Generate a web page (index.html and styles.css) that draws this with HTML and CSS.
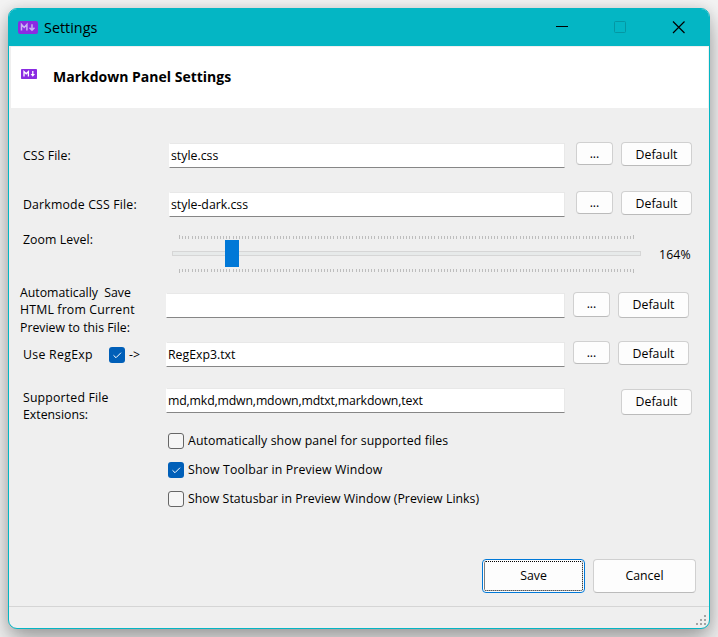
FILE: index.html
```html
<!DOCTYPE html>
<html lang="en">
<head>
<meta charset="utf-8">
<title>Settings</title>
<link rel="stylesheet" href="styles.css">
</head>
<body>
<div class="window">
  <div class="titlebar">
    <svg class="logo-large" width="20" height="13" viewBox="0 0 20 13"><rect width="20" height="13" rx="2.2" fill="#8a2be2"/><path d="M3.500 9.500v-6l2.700 3 2.700-3v6M14 3.200v5.600M11.500 6.800l2.500 2.400 2.500-2.400" fill="none" stroke="#c7b5f3" stroke-width="1.500"/></svg>
    <span class="title">Settings</span>
    <svg class="controls" width="132" height="14" viewBox="0 0 132 14"><path d="M1 6.500h12" stroke="#000"/><rect x="59.500" y="1.500" width="11" height="11" rx="1" fill="none" stroke="#0597a3"/><path d="M118 1.500l11.500 11.500M129.500 1.500L118 13" stroke="#000" stroke-width="1.200"/></svg>
  </div>
  <div class="header">
    <svg class="logo-small" width="16" height="10" viewBox="0 0 16 10"><rect width="16" height="10" rx=".7" fill="#8a2be2"/><path d="M3 7.500v-5l2.200 2.300 2.200-2.300v5M11.800 2v4" fill="none" stroke="#fff" stroke-width="1.300"/><path d="M9.600 5h4.400l-2.200 2.700z" fill="#fff"/></svg>
    <h1>Markdown Panel Settings</h1>
  </div>
  <div class="content">
    <div class="row">
      <label class="css-label">CSS File:</label>
      <div class="field">style.css</div>
      <button class="browse">...</button><button class="default">Default</button>
    </div>
    <div class="row">
      <label class="dark-label">Darkmode CSS File:</label>
      <div class="field">style-dark.css</div>
      <button class="browse">...</button><button class="default">Default</button>
    </div>
    <div class="row slider-row">
      <label class="zoom-label">Zoom Level:</label>
      <div class="slider"><div class="ticks"></div><div class="track"><div class="thumb"></div></div><div class="ticks bottom"></div></div>
      <span class="percent">164%</span>
    </div>
    <div class="row wide auto-row">
      <label class="auto-label"><span class="l1">Automatically&nbsp; Save</span><br><span class="l2">HTML from Current</span><br><span class="l3">Preview to this File:</span></label>
      <div class="field"></div>
      <button class="browse">...</button><button class="default">Default</button>
    </div>
    <div class="row wide regexp-row">
      <label class="regexp-label"><span class="rx">Use RegExp</span><span class="check on"><svg width="16" height="16" viewBox="0 0 16 16"><path d="M4.500 8.300l2.500 2.400 5-5" fill="none" stroke="#fff"/></svg></span><span>-&gt;</span></label>
      <div class="field rx-text">RegExp3.txt</div>
      <button class="browse">...</button><button class="default">Default</button>
    </div>
    <div class="row wide ext-row">
      <label class="ext-label"><span class="e1">Supported File</span><br><span class="e2">Extensions:</span></label>
      <div class="field ext-text">md,mkd,mdwn,mdown,mdtxt,markdown,text</div>
      <button class="default">Default</button>
    </div>
    <div class="options">
      <label class="option"><span class="check"></span><span class="o1">Automatically show panel for supported files</span></label>
      <label class="option"><span class="check on"><svg width="16" height="16" viewBox="0 0 16 16"><path d="M4.500 8.300l2.500 2.400 5-5" fill="none" stroke="#fff"/></svg></span><span class="o2">Show Toolbar in Preview Window</span></label>
      <label class="option"><span class="check"></span><span class="o3">Show Statusbar in Preview Window (Preview Links)</span></label>
    </div>
    <div class="actions"><button class="save">Save</button><button class="cancel">Cancel</button></div>
  </div>
  <div class="statusbar"><svg width="11" height="11" viewBox="0 0 11 11" fill="#a3a3a3"><path d="M8 0h2v2h-2zM4 4h2v2h-2zM8 4h2v2h-2zM0 8h2v2h-2zM4 8h2v2h-2zM8 8h2v2h-2z"/></svg></div>
</div>
</body>
</html>
```
FILE: styles.css
```css
* { box-sizing: border-box; }
body {
  margin: 0;
  padding: 8px;
  height: 637px;
  overflow: hidden;
  background: #f3f3f3;
  font: 12.3px/17px "Open Sans", "Noto Sans", sans-serif;
  color: #000;
}
.window {
  display: flex;
  flex-direction: column;
  width: 702px;
  height: 621px;
  border: 1px solid #04b6c4;
  border-radius: 9px;
  background: #efefef;
  overflow: hidden;
  box-shadow: 0 12px 24px rgba(0,0,0,.33), 0 0 12px rgba(0,0,0,.1);
}
.titlebar {
  flex: none;
  display: flex;
  align-items: center;
  height: 37px;
  padding: 0 22px 0 9px;
  background: #04b6c4;
}
.title { margin-left: 6px; font-size: 14.4px; }
.controls { margin: -2px 0 0 auto; }
.header {
  flex: none;
  display: flex;
  height: 61px;
  margin: 1px 1px 0 2px;
  padding: 0 10px;
  background: #fff;
}
.logo-small { margin-top: 22px; }
h1 { margin: 21px 0 0 16px; font-size: 14px; line-height: 18px; font-weight: 700; white-space: nowrap; }
.content { flex: 1; padding-top: 34px; }
.row {
  display: flex;
  align-items: flex-start;
  height: 49px;
  padding-left: 14px;
}
label { white-space: nowrap; }
.row > label { width: 146px; margin-top: 5px; flex: none; }
.field {
  width: 396px;
  height: 25px;
  margin: 1px 11px 0 0;
  padding: 4px 1px 0;
  border: 1px solid #e8e8e8;
  border-bottom-color: #868686;
  border-left-color: #fff;
  line-height: 16px;
  background: #fff;
  white-space: nowrap;
}
button {
  padding: 0;
  border: 1px solid #d0d0d0;
  border-bottom-color: #bbb;
  border-radius: 4px;
  background: #fdfdfd;
  font: inherit;
  color: inherit;
}
.browse { width: 37px; height: 23px; line-height: 20px; margin-right: 8px; }
.default { width: 71px; height: 24px; }
.row.slider-row { height: 52px; }
.row.slider-row > label { width: 149px; margin-top: -9px; }
.slider { width: 469px; margin-top: -5px; }
.ticks {
  width: 455px;
  height: 4px;
  margin-left: 7px;
  background:
    linear-gradient(#bbb, #bbb) 0 0 / 1px 4px no-repeat,
    linear-gradient(#bbb, #bbb) 100% 0 / 1px 4px no-repeat,
    repeating-linear-gradient(90deg, #bdbdbd 0 1px, transparent 1px 3.153px) 0 1px / 100% 3px no-repeat;
}
.ticks.bottom { background-position: 0 0, 100% 0, 0 0; margin-top: 13px; }
.track {
  position: relative;
  height: 5px;
  margin-top: 12px;
  border: 1px solid #d6d6d6;
  background: #e7eaea;
}
.thumb { position: absolute; left: 52px; top: -12px; width: 14px; height: 27px; background: #0078d7; }
.percent { margin: 6px 0 0 18px; letter-spacing: .1px; }
.row.wide { padding-left: 11px; }
.row.auto-row > label { line-height: 17.3px; margin-top: -8px; }
.wide .field { width: 399px; margin-right: 8px; }
.auto-row .browse { height: 25px; }
.auto-row .default { height: 26px; }
.row.regexp-row { height: 47px; }
.regexp-label { display: flex; align-items: center; padding-left: 3px; }
.rx { width: 86px; letter-spacing: .3px; }
.dark-label, .l2, .e1 { letter-spacing: .17px; }
.zoom-label, .css-label { letter-spacing: .08px; }
.ext-text { letter-spacing: -.16px; }
.o1 { letter-spacing: .11px; }
.o2 { letter-spacing: .14px; }
.o3 { letter-spacing: .04px; }
.check {
  display: inline-block;
  flex: none;
  width: 16px;
  height: 16px;
  margin-right: 4px;
  border: 1px solid #666;
  border-radius: 3px;
  background: #f5f5f5;
}
.check.on { border: 0; background: #005fb8; }
.check svg { display: block; }
.row.ext-row > .ext-label { padding-left: 3px; margin-top: 1px; }
.ext-row .field { margin-top: 0; margin-right: 56px; }
.ext-row .default { height: 26px; margin-top: 1px; padding-bottom: 2px; }
.auto-row .default, .auto-row .browse { padding-bottom: 1px; }
.options { display: grid; gap: 13px; margin: -4px 0 0 159px; }
.option { display: flex; height: 16px; line-height: 15px; }
.actions { display: flex; gap: 8px; margin: 52px 0 0 473px; }
.actions button { width: 103px; height: 34px; padding-bottom: 2px; }
.actions .save { border: 1px solid #0078d7; outline: 1px dotted #000; outline-offset: -3px; }
.statusbar {
  display: flex;
  justify-content: flex-end;
  align-items: flex-end;
  flex: none;
  height: 22px;
  border-top: 1px solid #d5d5d5;
  padding: 0 2px 2px;
}
```
